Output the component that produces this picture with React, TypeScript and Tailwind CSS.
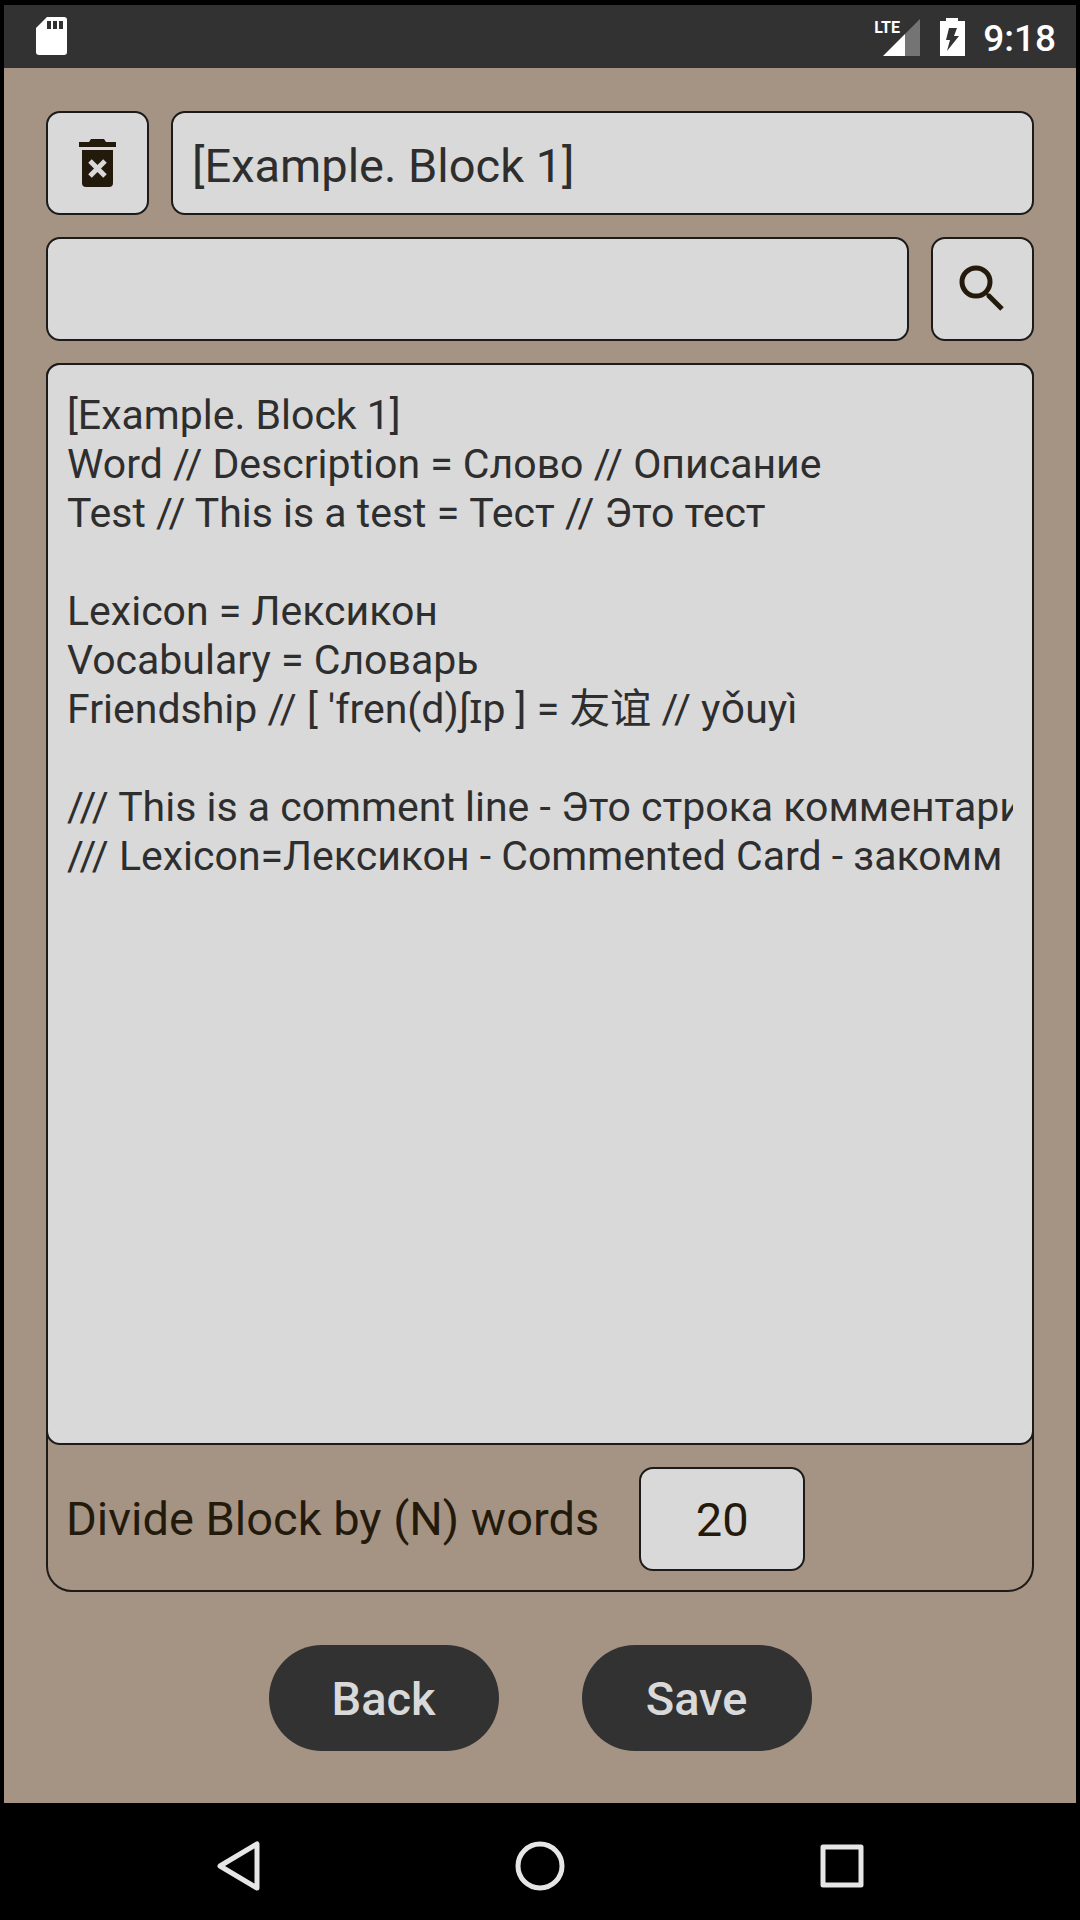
import { useState } from "react"

const BLOCK_TEXT = `[Example. Block 1]
Word // Description = Слово // Описание
Test // This is a test = Тест // Это тест

Lexicon = Лексикон
Vocabulary = Словарь
Friendship // [ 'fren(d)ʃɪp ] = 友谊 // yǒuyì

/// This is a comment line - Это строка комментари
/// Lexicon=Лексикон - Commented Card - закомм`

function StatusBar() {
  return (
    <header className="flex h-[63px] items-center justify-between bg-[#323232] pr-5 pl-8 text-white">
      <svg width="31" height="39" viewBox="0 0 31 39" role="img" aria-label="SD card">
        <path d="M11 0h17a3 3 0 0 1 3 3v32a3 3 0 0 1-3 3H3a3 3 0 0 1-3-3V11z" fill="currentColor" />
        <path d="M11 4h4v8h-4zM17 4h4v8h-4zM23 4h4v8h-4z" fill="#323232" />
      </svg>

      <div className="flex items-center">
        <div className="relative mr-5 h-[38px] w-[46px]">
          <span className="absolute top-0 left-0 text-base leading-5 font-bold">LTE</span>
          <svg className="absolute right-0 bottom-0" width="37" height="37" viewBox="0 0 37 37" aria-hidden="true">
            <path d="M37 0v37H22V15z" fill="#747474" />
            <path d="M22 15v22H0z" fill="currentColor" />
          </svg>
        </div>
        <svg className="mr-[18px]" width="25" height="38" viewBox="0 0 25 38" role="img" aria-label="Battery charging">
          <path d="M6 0h12v3h7v35H0V3h6z" fill="currentColor" />
          <path d="M9 10h8l-3 8h5L7 33l3-11H6z" fill="#323232" />
        </svg>
        <span className="pt-1 text-[37px] leading-10 font-medium">9:18</span>
      </div>
    </header>
  )
}

function DeleteIcon() {
  return (
    <svg width="38" height="48" viewBox="0 0 38 48" aria-hidden="true">
      <path d="M0 3h10l2-3h13l2 3h10v5H0zM3 11h31v33a4 4 0 0 1-4 4H7a4 4 0 0 1-4-4z" fill="#231a0c" />
      <path d="M11 22l15 15M26 22L11 37" stroke="#d9d9d9" strokeWidth="5" />
    </svg>
  )
}

function SearchIcon() {
  return (
    <svg width="48" height="48" viewBox="0 0 48 48" fill="none" stroke="#231a0c" aria-hidden="true">
      <circle cx="17" cy="17" r="14" strokeWidth="5" />
      <path d="M26 27l4 4" strokeWidth="3" />
      <path d="M29 30l14 14" strokeWidth="5" />
    </svg>
  )
}

function NavBar() {
  return (
    <nav className="flex h-[117px] items-center justify-around bg-black px-[86px] pt-2 text-[#e6e6e6]">
      <button aria-label="Back">
        <svg width="50" height="52" viewBox="0 0 50 52" fill="none" stroke="currentColor" strokeWidth="5" strokeLinejoin="round">
          <path d="M45 4v44L8 26z" />
        </svg>
      </button>
      <button aria-label="Home">
        <svg width="50" height="52" viewBox="0 0 50 52" fill="none" stroke="currentColor" strokeWidth="5">
          <circle cx="25" cy="26" r="22" />
        </svg>
      </button>
      <button aria-label="Recent apps">
        <svg width="50" height="52" viewBox="0 0 50 52" fill="none" stroke="currentColor" strokeWidth="5" strokeLinejoin="round">
          <path d="M5 7h38v38H5z" />
        </svg>
      </button>
    </nav>
  )
}

const field = "rounded-[14px] border-2 border-[#1c1b1a] bg-[#d9d9d9] outline-none"
const pill = "h-[106px] w-[230px] rounded-full bg-[#323232] pt-[2px] text-[47px] leading-[54px] font-medium text-[#d9d9d9]"

export default function App() {
  const [title, setTitle] = useState("[Example. Block 1]")
  const [query, setQuery] = useState("")
  const [text, setText] = useState(BLOCK_TEXT)
  const [count, setCount] = useState("20")

  return (
    <div className="flex min-h-screen flex-col bg-black font-[Roboto,'Noto_Sans','Noto_Sans_CJK_SC',sans-serif]">
      <div className="flex grow flex-col px-1 pt-[5px]">
        <StatusBar />

        <main className="flex grow flex-col bg-[#a59484] px-[42px] pt-[43px] pb-[52px]">
          <div className="flex gap-[22px]">
            <button aria-label="Delete block" className={`${field} flex h-[104px] w-[103px] shrink-0 items-center justify-center`}>
              <DeleteIcon />
            </button>
            <input
              aria-label="Block title"
              value={title}
              onChange={(e) => setTitle(e.target.value)}
              className={`${field} h-[104px] min-w-0 grow px-[19px] pt-1 text-[47px] text-[#2e2e2e]`}
            />
          </div>

          <div className="mt-[22px] flex gap-[22px]">
            <input
              type="search"
              aria-label="Search text"
              value={query}
              onChange={(e) => setQuery(e.target.value)}
              className={`${field} h-[104px] min-w-0 grow px-[19px] pt-1 text-[47px] text-[#2e2e2e]`}
            />
            <button aria-label="Search" className={`${field} flex h-[104px] w-[103px] shrink-0 items-center justify-center`}>
              <SearchIcon />
            </button>
          </div>

          <section className="mt-[22px] flex grow flex-col rounded-t-[14px] rounded-b-[26px] border-2 border-[#1c1b1a]">
            <div className={`${field} -mx-[2px] -mt-[2px] flex grow px-[19px] pt-[26px] pb-4`}>
              <textarea
                aria-label="Block text"
                wrap="off"
                spellCheck={false}
                value={text}
                onChange={(e) => setText(e.target.value)}
                className="grow resize-none overflow-hidden text-[41px] leading-[49px] whitespace-pre text-[#2e2e2e] outline-none"
              />
            </div>
            <div className="flex items-center gap-10 px-[18px] pt-[22px] pb-[19px] text-[47px] text-[#231a0c]">
              <label htmlFor="divide">Divide Block by (N) words</label>
              <input
                id="divide"
                inputMode="numeric"
                value={count}
                onChange={(e) => setCount(e.target.value)}
                className={`${field} h-[104px] w-[166px] text-center`}
              />
            </div>
          </section>

          <div className="mt-[53px] flex justify-center gap-[83px]">
            <button className={pill}>Back</button>
            <button className={pill}>Save</button>
          </div>
        </main>
      </div>

      <NavBar />
    </div>
  )
}
